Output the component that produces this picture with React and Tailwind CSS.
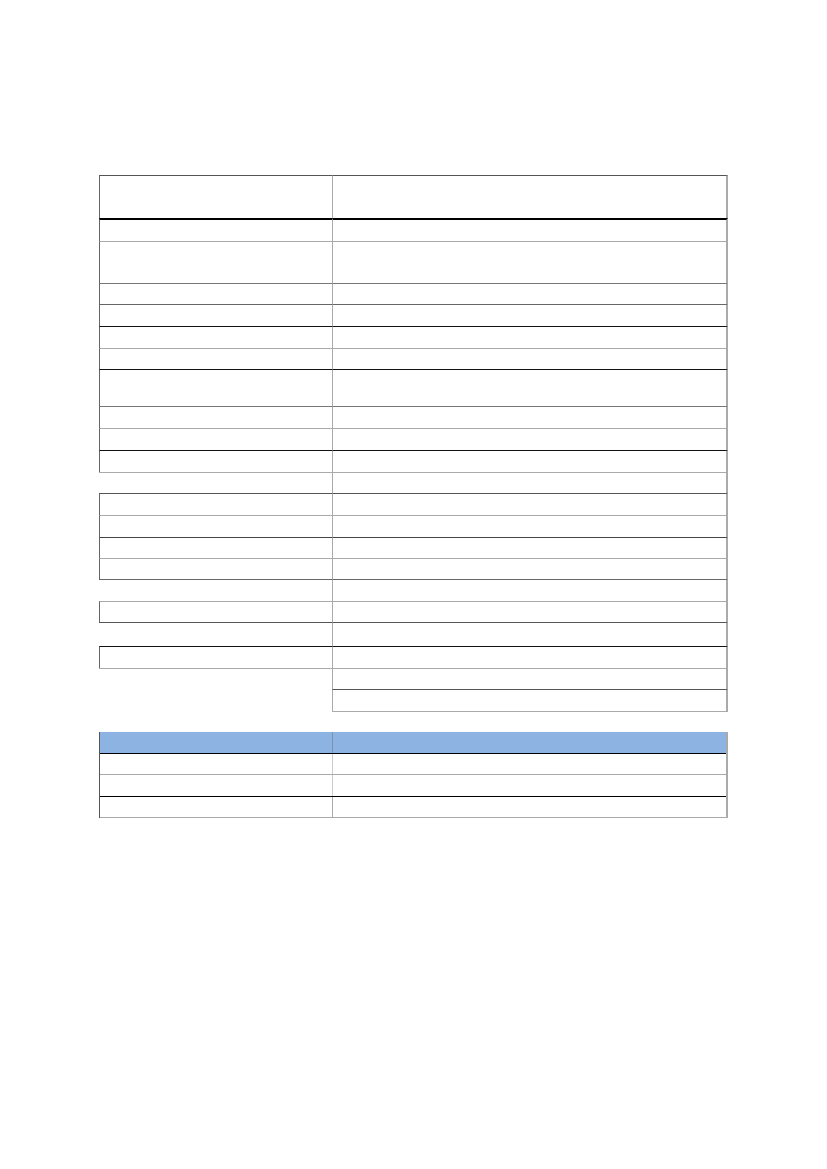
import React from "react";

// rows of the first table: height, whether the left cell exists, and the colour of the top rule
const rows = [
  { h: 44, left: true, top: "#555555" },
  { h: 22, left: true, top: "#000000", thick: true },
  { h: 42, left: true, top: "#aaaaaa" },
  { h: 21, left: true, top: "#777777" },
  { h: 22, left: true, top: "#666666" },
  { h: 22, left: true, top: "#111111" },
  { h: 21, left: true, top: "#aaaaaa" },
  { h: 37, left: true, top: "#111111" },
  { h: 22, left: true, top: "#777777" },
  { h: 22, left: true, top: "#aaaaaa" },
  { h: 22, left: true, top: "#111111" },
  { h: 21, left: false, top: "#aaaaaa" },
  { h: 22, left: true, top: "#555555" },
  { h: 22, left: true, top: "#aaaaaa" },
  { h: 21, left: true, top: "#444444" },
  { h: 21, left: true, top: "#aaaaaa" },
  { h: 22, left: false, top: "#666666" },
  { h: 21, left: true, top: "#aaaaaa" },
  { h: 24, left: false, top: "#555555" },
  { h: 22, left: true, top: "#111111" },
  { h: 21, left: false, top: "#aaaaaa" },
  { h: 22, left: false, top: "#555555" },
];

const Row = ({ row, prevLeft }) => {
  const showLeftTop = row.left || prevLeft;
  const bw = row.thick ? 2 : 1;
  return (
    <div className="flex" style={{ height: row.h }}>
      <div
        className="w-[233px] shrink-0"
        style={{
          borderTop: showLeftTop ? `${bw}px solid ${row.top}` : "none",
          borderLeft: row.left ? "1px solid #666666" : "none",
          marginTop: row.thick ? -1 : 0,
        }}
      />
      <div
        className="w-[396px] shrink-0 border-l border-r-2 border-l-[#aaaaaa] border-r-[#aaaaaa]"
        style={{
          borderTop: `${bw}px solid ${row.top}`,
          marginTop: row.thick ? -1 : 0,
        }}
      />
    </div>
  );
};

const App = () => {
  return (
    <div className="w-[827px] h-[1169px] bg-white pt-[175px] pl-[99px]">
      {/* first table */}
      <div className="flex flex-col">
        {rows.map((r, i) => (
          <Row key={i} row={r} prevLeft={i > 0 && rows[i - 1].left} />
        ))}
        <div className="flex">
          <div className="w-[233px] shrink-0" />
          <div className="w-[396px] shrink-0 border-t border-[#aaaaaa]" />
        </div>
      </div>

      {/* second table */}
      <div className="mt-[20px] w-[629px] border-l border-l-[#555555] border-r-2 border-r-[#aaaaaa]">
        <div className="flex h-[21px] bg-[#8db3e2]">
          <div className="w-[232px] shrink-0" />
          <div className="flex-1 border-l border-l-[#7f92ad]" />
        </div>
        <div className="flex h-[21px] border-t border-t-black">
          <div className="w-[232px] shrink-0" />
          <div className="flex-1 border-l border-l-[#cccccc]" />
        </div>
        <div className="flex h-[22px] border-t border-t-[#aaaaaa]">
          <div className="w-[232px] shrink-0" />
          <div className="flex-1 border-l border-l-[#cccccc]" />
        </div>
        <div className="flex h-[22px] border-t border-t-black border-b border-b-[#aaaaaa]">
          <div className="w-[232px] shrink-0" />
          <div className="flex-1 border-l border-l-[#aaaaaa]" />
        </div>
      </div>
    </div>
  );
};

export default App;
